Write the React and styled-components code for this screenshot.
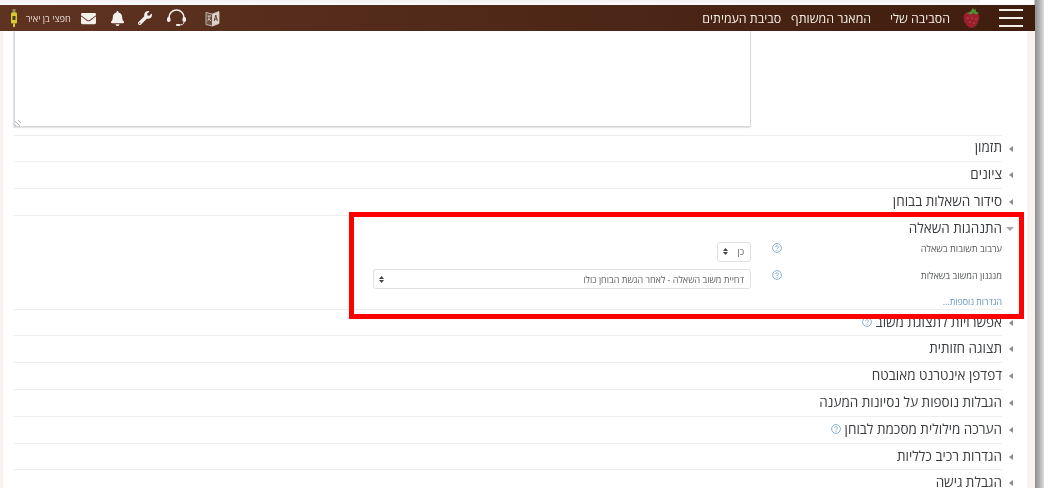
import React from "react";
import styled, { createGlobalStyle } from "styled-components";
import { FaBell, FaEnvelope, FaWrench } from "react-icons/fa";

const GlobalStyle = createGlobalStyle`
  html, body {
    margin: 0;
    padding: 0;
    background: #fff;
    overflow: hidden;
  }
`;

const Page = styled.div`
  position: relative;
  width: 1044px;
  height: 488px;
  overflow: hidden;
  padding-top: 5px;
  box-sizing: border-box;
  background:
    linear-gradient(#f1f1f1, #fbfbfb) 0 0 / 980px 5px no-repeat,
    linear-gradient(to right, #fff 1034px, #8f8f8f 1035px, #b5b5b5 1040px, #dedede 1044px);
  font-family: "Open Sans", "Liberation Sans", sans-serif;
  color: #373a3c;
  direction: rtl;
  filter: blur(0.3px);
`;

const Window = styled.div`
  width: 1035px;
  height: 483px;
  margin-right: 9px;
  background: #f8f3ef;
  overflow: hidden;
`;

const Header = styled.header`
  display: flex;
  align-items: center;
  height: 26px;
  background: linear-gradient(to left, #3f1d0e, #5f3321);
  color: #fff;
  padding-right: 12px;
  box-sizing: border-box;
`;

const Burger = styled.div`
  display: flex;
  flex-direction: column;
  gap: 6px;
  width: 24px;
  margin-left: 19px;

  span {
    display: block;
    height: 2px;
    background: #f2eeea;
  }
`;

const NavLink = styled.a`
  font-size: 12.4px;
  white-space: nowrap;
  color: #f5efe9;
  margin-right: ${(p) => p.$gap || 0}px;
`;

const Tools = styled.div`
  display: flex;
  align-items: center;
  margin-right: auto;
  padding-left: 10px;
  direction: ltr;
`;

const ToolSlot = styled.span`
  display: flex;
  margin-left: ${(p) => p.$gap}px;
  color: #f4f0ec;
`;

const UserName = styled.span`
  direction: rtl;
  font-size: 9.2px;
  color: #e6ddd6;
  margin-left: 8px;
`;

const Main = styled.main`
  width: 1024px;
  height: 457px;
  margin-right: 8px;
  margin-left: 3px;
  background: #fff;
  padding: 0 25px 0 11px;
  box-sizing: border-box;
  overflow: hidden;
`;

const Notes = styled.textarea`
  display: block;
  width: 737px;
  height: 96px;
  margin: 0 251px 7.5px 0;
  box-sizing: border-box;
  border: 1px solid #d5d8dc;
  border-top: 0;
  box-shadow: -1px 1px 1px #e4e4e4;
  background: #fff;

  &::-webkit-resizer {
    background: repeating-linear-gradient(45deg, #b5b5b5 0 1px, transparent 1px 3px) left bottom / 6px 6px no-repeat;
  }
`;

const Section = styled.section`
  border-top: 1px solid #eceeef;
`;

const SectionHead = styled.div`
  position: relative;
  display: flex;
  align-items: center;
  gap: 4px;
  height: 25.8px;
  padding-bottom: 2px;
  box-sizing: border-box;
  font-size: 13.5px;
  line-height: 12px;
  color: #3a3d40;
  white-space: nowrap;
`;

const Arrow = styled.span`
  position: absolute;
  right: -11px;
  top: 10px;
  width: 0;
  height: 0;
  border-top: 3px solid transparent;
  border-bottom: 3px solid transparent;
  border-right: 4px solid #8b8e90;
  ${(p) =>
    p.$open &&
    `
    right: -12px;
    top: 11px;
    border-right: 4px solid transparent;
    border-left: 4px solid transparent;
    border-bottom: 0;
    border-top: 4px solid #a4a7a9;
  `}
`;

const FormRow = styled.div`
  display: grid;
  grid-template-columns: 213px 38px ${(p) => p.$width}px;
  align-items: center;
  height: 20px;
  margin-bottom: 7.6px;
`;

const Label = styled.label`
  font-size: 9.2px;
  color: #55585a;
  align-self: start;
`;

const HelpWrap = styled.span`
  display: flex;
  justify-content: flex-start;
  align-self: start;
  margin-right: 7px;
  margin-top: 1px;
`;

const SelectBox = styled.div`
  display: flex;
  align-items: center;
  justify-content: space-between;
  height: 20px;
  padding: 0 6px 0 5px;
  box-sizing: border-box;
  border: 1px solid #e0e3e6;
  border-radius: 3px;
  background: #fff;
  font-size: 9px;
  color: #5f6265;
`;

const MoreLink = styled.a`
  display: block;
  font-size: 8.8px;
  line-height: 10px;
  color: #5f96b9;
  height: 11.8px;
`;

const Highlight = styled.div`
  position: absolute;
  left: 349px;
  top: 212px;
  width: 675px;
  height: 107px;
  box-sizing: border-box;
  border: 5px solid #fe0000;
`;

const Help = ({ size = 10 }) => (
  <svg width={size} height={size} viewBox="0 0 10 10">
    <circle cx="5" cy="5" r="4.4" fill="none" stroke="#78a9c6" strokeWidth="0.9" />
    <path d="M3.6 4a1.4 1.3 0 1 1 2.2 1.1c-.5.3-.8.5-.8 1" fill="none" stroke="#78a9c6" strokeWidth="0.9" />
    <circle cx="5" cy="7.5" r="0.55" fill="#78a9c6" />
  </svg>
);

const Carets = () => (
  <svg width="5" height="7" viewBox="0 0 5 7">
    <path d="M2.5 0 5 3H0zM2.5 7 0 4h5z" fill="#444" />
  </svg>
);

const Strawberry = () => (
  <svg width="17" height="22" viewBox="0 0 17 22">
    <path d="M8.500 5C13 4 16.500 6 16.300 10.500c-.2 4.700-3.700 10.500-7.800 10.500C4.500 21 .7 15.300.6 10.500.5 6.500 4 4 8.500 5z" fill="#9c1f2c" />
    <path d="M4 6.500 7 5 10 1l1.500 2 1-1.500.5 3 3 1.500-3 1.500-2.500-1.500-2.500 1.500z" fill="#4d8f35" />
    <g fill="#d98c8c">
      <circle cx="5" cy="11" r=".6" />
      <circle cx="9" cy="11" r=".6" />
      <circle cx="13" cy="12" r=".6" />
      <circle cx="7" cy="15" r=".6" />
      <circle cx="11" cy="16" r=".6" />
    </g>
  </svg>
);

const Headset = () => (
  <svg width="21" height="18" viewBox="0 0 21 18" fill="none">
    <path d="M3 10V8.500a7.500 7.500 0 0 1 15 0V10" stroke="#f4f0ec" strokeWidth="1.600" />
    <rect x="1" y="8" width="3.500" height="5" rx="1.700" fill="#f4f0ec" />
    <rect x="16.500" y="8" width="3.500" height="5" rx="1.700" fill="#f4f0ec" />
    <path d="M18 13c0 2.500-2.500 3-5 3" stroke="#f4f0ec" />
    <rect x="10" y="15" width="4" height="2" rx="1" fill="#f4f0ec" />
  </svg>
);

const Translate = () => (
  <svg width="15" height="17" viewBox="0 0 15 17">
    <path d="M1 2.500 7.500 4v12L1 14.500z" fill="#6e5344" stroke="#d8cfc6" strokeWidth=".8" />
    <path d="M7.500 4 14 1.500v12L7.500 16z" fill="#dcd4cc" stroke="#d8cfc6" strokeWidth=".8" />
    <path d="M9.200 11 10.800 5l1.600 6M9.800 9.200h2" fill="none" stroke="#5a3525" strokeWidth=".9" />
    <path d="M2.500 6h3.500M4 6v1.500c0 2-1 3-1.500 3.500M3.500 8.500 6 11" fill="none" stroke="#e8e0d8" strokeWidth=".8" />
  </svg>
);

const Usb = () => (
  <svg width="8" height="18" viewBox="0 0 8 18">
    <rect x="2.500" y="0" width="3" height="4" fill="#8d8a55" />
    <rect x="1" y="3.500" width="6" height="11" rx="1" fill="#d8c92e" />
    <rect x="2.500" y="7" width="3" height="4" fill="#4b4020" />
    <path d="M3 14.500h2V18H3z" fill="#d8c92e" />
  </svg>
);

const sectionsTop = ["תזמון", "ציונים", "סידור השאלות בבוחן"];

const sectionsBottom = [
  { title: "אפשרויות לתצוגת משוב", help: true },
  { title: "תצוגה חזותית" },
  { title: "דפדפן אינטרנט מאובטח" },
  { title: "הגבלות נוספות על נסיונות המענה" },
  { title: "הערכה מילולית מסכמת לבוחן", help: true },
  { title: "הגדרות רכיב כלליות" },
  { title: "הגבלת גישה" },
];

export default function App() {
  return (
    <Page>
      <GlobalStyle />
      <Window>
        <Header>
          <Burger>
            <span />
            <span />
            <span />
          </Burger>
          <Strawberry />
          <NavLink $gap={13}>הסביבה שלי</NavLink>
          <NavLink $gap={19}>המאגר המשותף</NavLink>
          <NavLink $gap={10}>סביבת העמיתים</NavLink>
          <Tools>
            <ToolSlot $gap={0}>
              <Usb />
            </ToolSlot>
            <UserName>חפצי בן יאיר</UserName>
            <ToolSlot $gap={10}>
              <FaEnvelope size={15} />
            </ToolSlot>
            <ToolSlot $gap={14}>
              <FaBell size={15} />
            </ToolSlot>
            <ToolSlot $gap={13}>
              <FaWrench size={14} />
            </ToolSlot>
            <ToolSlot $gap={14}>
              <Headset />
            </ToolSlot>
            <ToolSlot $gap={18}>
              <Translate />
            </ToolSlot>
          </Tools>
        </Header>
        <Main>
          <Notes defaultValue="" />
          {sectionsTop.map((title) => (
            <Section key={title}>
              <SectionHead>
                <Arrow />
                {title}
              </SectionHead>
            </Section>
          ))}
          <Section>
            <SectionHead>
              <Arrow $open />
              התנהגות השאלה
            </SectionHead>
            <FormRow $width={34}>
              <Label>ערבוב תשובות בשאלה</Label>
              <HelpWrap>
                <Help />
              </HelpWrap>
              <SelectBox>
                <span>כן</span>
                <Carets />
              </SelectBox>
            </FormRow>
            <FormRow $width={378}>
              <Label>מנגנון המשוב בשאלות</Label>
              <HelpWrap>
                <Help />
              </HelpWrap>
              <SelectBox>
                <span>דחיית משוב השאלה - לאחר הגשת הבוחן כולו</span>
                <Carets />
              </SelectBox>
            </FormRow>
            <MoreLink>הגדרות נוספות...</MoreLink>
          </Section>
          {sectionsBottom.map(({ title, help }) => (
            <Section key={title}>
              <SectionHead>
                <Arrow />
                {title}
                {help && <Help />}
              </SectionHead>
            </Section>
          ))}
        </Main>
      </Window>
      <Highlight />
    </Page>
  );
}
